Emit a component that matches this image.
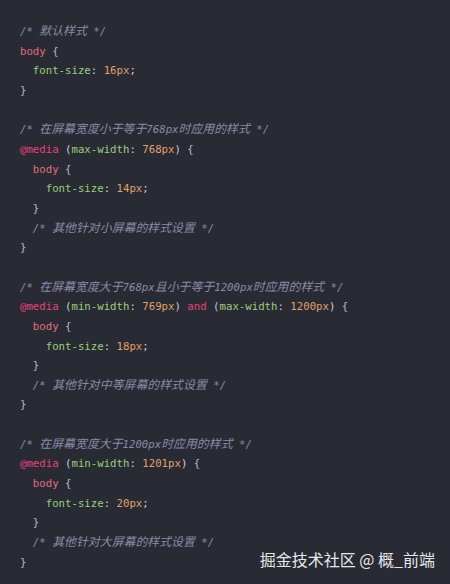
import React from 'react';

type Tok = [string, string];

const C = {
  cm: 'text-[#8c89a6] italic',
  sel: 'text-[#e06c80]',
  br: 'text-[#a9bdd0]',
  prop: 'text-[#9ccc7c]',
  num: 'text-[#e0a068]',
  at: 'text-[#e8407a]',
  kw: 'text-[#e8407a]',
  pl: 'text-[#c9ccd6]',
};

const lines: Tok[][] = [
  [[C.cm, '/* 默认样式 */']],
  [[C.sel, 'body'], [C.pl, ' '], [C.br, '{']],
  [[C.prop, '  font-size'], [C.pl, ': '], [C.num, '16px'], [C.pl, ';']],
  [[C.br, '}']],
  [],
  [[C.cm, '/* 在屏幕宽度小于等于768px时应用的样式 */']],
  [[C.at, '@media'], [C.pl, ' ('], [C.prop, 'max-width'], [C.pl, ': '], [C.num, '768px'], [C.pl, ') '], [C.br, '{']],
  [[C.sel, '  body'], [C.pl, ' '], [C.br, '{']],
  [[C.prop, '    font-size'], [C.pl, ': '], [C.num, '14px'], [C.pl, ';']],
  [[C.br, '  }']],
  [[C.cm, '  /* 其他针对小屏幕的样式设置 */']],
  [[C.br, '}']],
  [],
  [[C.cm, '/* 在屏幕宽度大于768px且小于等于1200px时应用的样式 */']],
  [
    [C.at, '@media'], [C.pl, ' ('], [C.prop, 'min-width'], [C.pl, ': '], [C.num, '769px'], [C.pl, ') '],
    [C.kw, 'and'], [C.pl, ' ('], [C.prop, 'max-width'], [C.pl, ': '], [C.num, '1200px'], [C.pl, ') '], [C.br, '{'],
  ],
  [[C.sel, '  body'], [C.pl, ' '], [C.br, '{']],
  [[C.prop, '    font-size'], [C.pl, ': '], [C.num, '18px'], [C.pl, ';']],
  [[C.br, '  }']],
  [[C.cm, '  /* 其他针对中等屏幕的样式设置 */']],
  [[C.br, '}']],
  [],
  [[C.cm, '/* 在屏幕宽度大于1200px时应用的样式 */']],
  [[C.at, '@media'], [C.pl, ' ('], [C.prop, 'min-width'], [C.pl, ': '], [C.num, '1201px'], [C.pl, ') '], [C.br, '{']],
  [[C.sel, '  body'], [C.pl, ' '], [C.br, '{']],
  [[C.prop, '    font-size'], [C.pl, ': '], [C.num, '20px'], [C.pl, ';']],
  [[C.br, '  }']],
  [[C.cm, '  /* 其他针对大屏幕的样式设置 */']],
  [[C.br, '}']],
];

// CJK runs are a bit wider than in the mono font, so bump them up
function Text({ t }: { t: string }) {
  const parts = t.split(/([\u4e00-\u9fff]+)/);
  return (
    <>
      {parts.map((p, k) =>
        /[\u4e00-\u9fff]/.test(p) ? (
          <span key={k} className="text-[11.9px]">{p}</span>
        ) : (
          p
        )
      )}
    </>
  );
}

export default function App() {
  return (
    <div className="relative w-[450px] h-[584px] overflow-hidden bg-[#292b34]">
      <div className="pt-[22px] pl-[20px] text-[10.7px] leading-[19.67px] whitespace-pre font-['DejaVu_Sans_Mono','Noto_Sans_CJK_SC',monospace]">
        {lines.map((toks, i) => (
          <div key={i} className="h-[19.67px]">
            {toks.map(([cls, t], j) => (
              <span key={j} className={cls}>
                <Text t={t} />
              </span>
            ))}
          </div>
        ))}
      </div>
      {/* 水印 */}
      <div className="absolute right-[15px] top-[548px] text-[16px] leading-[22px] text-[#e6e6e8] font-['Noto_Sans_CJK_SC',sans-serif]">
        掘金技术社区 @ 概_前端
      </div>
    </div>
  );
}
